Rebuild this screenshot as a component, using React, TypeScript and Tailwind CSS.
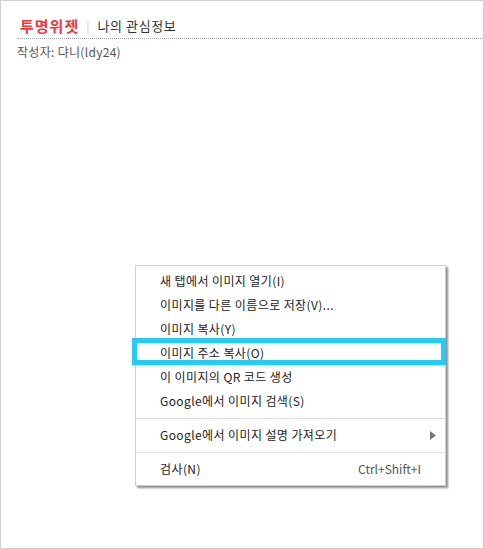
const font = { fontFamily: '"Noto Sans CJK KR", "Noto Sans", sans-serif' };

type Item = { label: string; shortcut?: string; submenu?: boolean } | "sep";

const items: Item[] = [
  { label: "새 탭에서 이미지 열기(I)" },
  { label: "이미지를 다른 이름으로 저장(V)..." },
  { label: "이미지 복사(Y)" },
  { label: "이미지 주소 복사(O)" },
  { label: "이 이미지의 QR 코드 생성" },
  { label: "Google에서 이미지 검색(S)" },
  "sep",
  { label: "Google에서 이미지 설명 가져오기", submenu: true },
  "sep",
  { label: "검사(N)", shortcut: "Ctrl+Shift+I" },
];

function ContextMenu() {
  return (
    <div className="absolute left-[134px] top-[264px] w-[311px] h-[221px] bg-white border border-[#cfcfcf] shadow-[2px_2px_2px_rgba(0,0,0,0.45)] pt-[3px]">
      {items.map((it, i) =>
        it === "sep" ? (
          <div key={i} className="h-[10px] flex items-center">
            <div className="w-full h-px bg-[#e0e0e0]" />
          </div>
        ) : (
          <div
            key={i}
            className="h-[24px] flex items-center pl-[24px] pr-[10px] text-[12px] text-[#222]"
          >
            <span className="flex-1 tracking-[0.4px]">{it.label}</span>
            {it.shortcut && <span className="text-[#555] mr-[14px]">{it.shortcut}</span>}
            {it.submenu && (
              <svg width="6" height="9" viewBox="0 0 6 9" className="mr-[-1px]">
                <path d="M0 0 L6 4.5 L0 9 Z" fill="#777" />
              </svg>
            )}
          </div>
        )
      )}
    </div>
  );
}

export default function App() {
  return (
    <div
      className="relative w-[484px] h-[549px] bg-white border border-[#d0d0d0] overflow-hidden"
      style={font}
    >
      <div className="ml-[16px] pt-[13px] h-[38px] border-b border-dotted border-[#aaa] flex items-center pl-[3px]">
        <span className="text-[15px] font-bold text-[#f0373f] tracking-[1px]">투명위젯</span>
        <span className="ml-[7px] mr-[8px] text-[12px] text-[#ccc]">|</span>
        <span className="text-[13px] text-[#333] tracking-[0.6px]">나의 관심정보</span>
      </div>
      <div className="ml-[16px] mt-[4px] text-[12px] text-[#555] tracking-[0.3px]">작성자: 댜니(ldy24)</div>

      <ContextMenu />

      <div className="absolute left-[131px] top-[337px] w-[314px] h-[27px] border-[5px] border-[#22ccf6]" />
    </div>
  );
}
